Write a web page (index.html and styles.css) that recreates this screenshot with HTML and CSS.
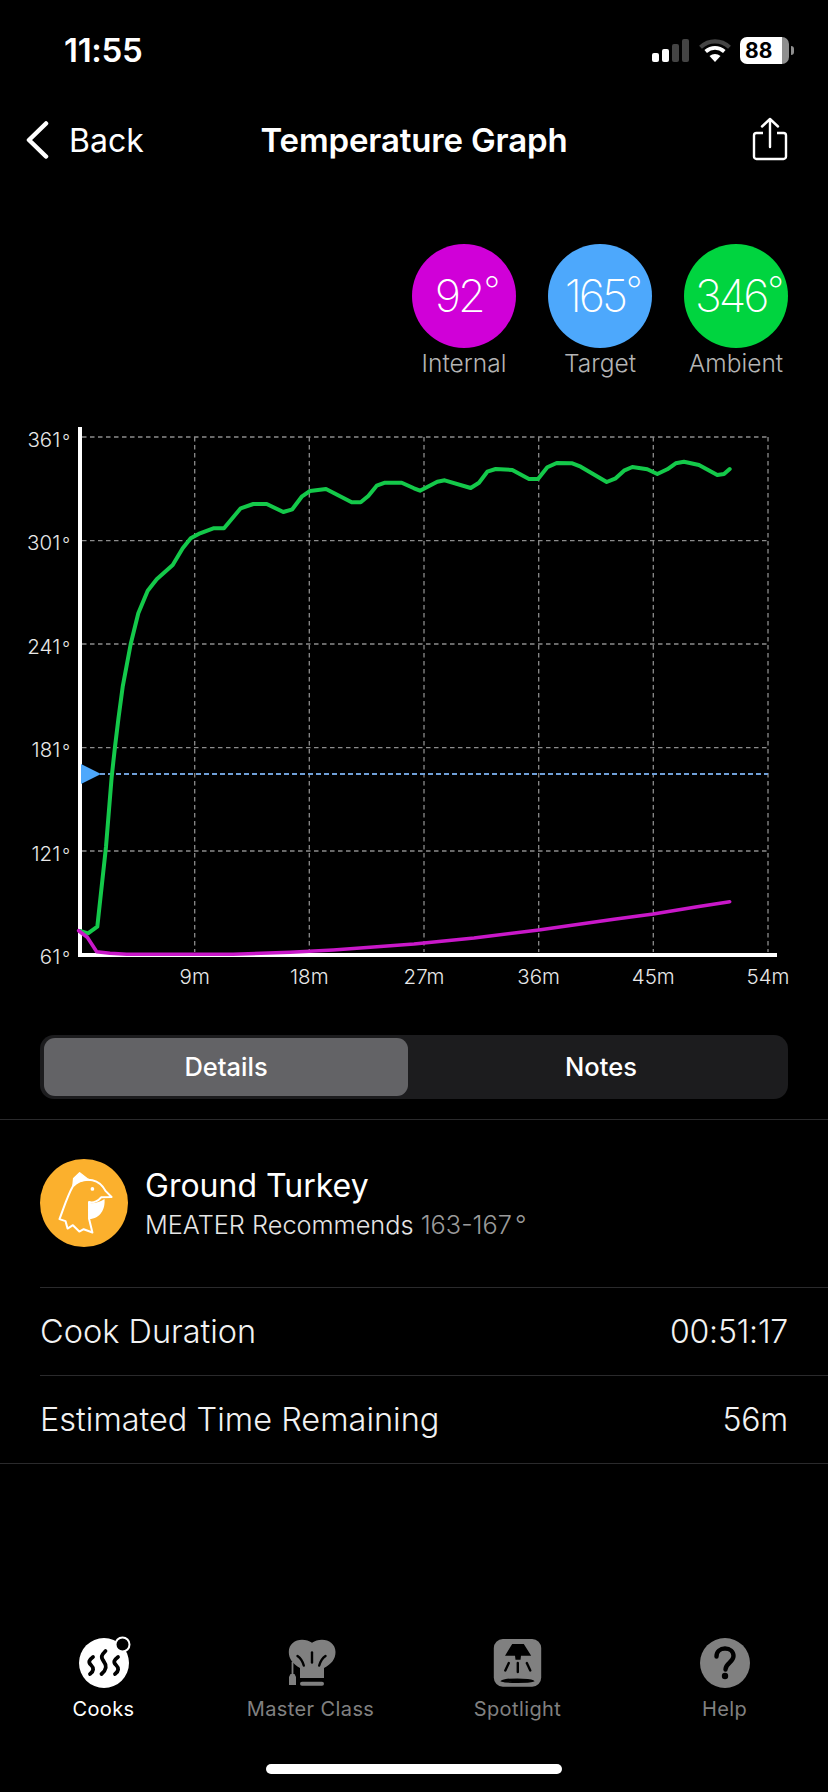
FILE: index.html
```html
<!DOCTYPE html>
<html lang="en">
<head>
<meta charset="utf-8">
<title>Temperature Graph</title>
<link rel="stylesheet" href="styles.css">
</head>
<body>
<div class="screen">
  <header class="status">
    <span class="time">11:55</span>
    <div class="status-icons">
      <svg class="signal" width="37" height="23" viewBox="0 0 37 23">
        <rect x="0" y="14" width="7" height="9" rx="2" fill="#fff"/>
        <rect x="10" y="10" width="7" height="13" rx="2" fill="#fff"/>
        <rect x="20" y="5" width="7" height="18" rx="2" fill="#444"/>
        <rect x="30" y="0" width="7" height="23" rx="2" fill="#444"/>
      </svg>
      <svg class="wifi" width="32" height="23" viewBox="0 0 32 23">
        <path d="M1.5 8.2C10 .3 22 .3 30.500 8.200" fill="none" stroke="#444" stroke-width="4.200"/>
        <path d="M6.700 12.500C12.300 7.600 19.700 7.600 25.300 12.500" fill="none" stroke="#fff" stroke-width="3.800"/>
        <path d="M16 23l-5.500-6c3.300-2.700 7.700-2.700 11 0z" fill="#fff"/>
      </svg>
      <div class="battery">
        <div class="battery-body"><span class="battery-num">88</span></div>
        <div class="battery-tip"></div>
      </div>
    </div>
  </header>

  <nav class="nav">
    <div class="back">
      <svg width="24" height="38" viewBox="0 0 24 38"><path d="M21 2.500L4 19l17 16.500" fill="none" stroke="#fff" stroke-width="4.500" stroke-linecap="round" stroke-linejoin="round"/></svg>
      <span class="back-label">Back</span>
    </div>
    <h1 class="nav-title">Temperature Graph</h1>
    <svg class="share" width="36" height="44" viewBox="0 0 36 44">
      <path d="M11 16H4.500A2.500 2.500 0 0 0 2 18.500v21A2.500 2.500 0 0 0 4.500 42h27a2.500 2.500 0 0 0 2.500-2.500v-21a2.500 2.500 0 0 0-2.500-2.500H25" fill="none" stroke="#fff" stroke-width="2.400"/>
      <path d="M18 30V2M10 9.500L18 2l8 7.500" fill="none" stroke="#fff" stroke-width="2.400" stroke-linecap="round" stroke-linejoin="round"/>
    </svg>
  </nav>

  <section class="readings">
    <div class="reading">
      <div class="dial dial-internal">92<span class="deg">°</span></div>
      <div class="reading-label">Internal</div>
    </div>
    <div class="reading">
      <div class="dial dial-target">165<span class="deg">°</span></div>
      <div class="reading-label">Target</div>
    </div>
    <div class="reading">
      <div class="dial dial-ambient">346<span class="deg">°</span></div>
      <div class="reading-label">Ambient</div>
    </div>
  </section>

  <svg class="chart" width="828" height="580" viewBox="0 420 828 580">
    <g class="grid">
      <path d="M82 437H768M82 540.700H768M82 644H768M82 747.700H768M82 851H768"/>
      <path d="M194.700 437V952M309.300 437V952M424 437V952M538.700 437V952M653.300 437V952M768 437V952"/>
    </g>
    <path class="target-line" d="M100 774H768"/>
    <path class="axis" d="M80 427V955.500M78 955H777"/>
    <path class="target-mark" d="M81 764L101 774 81 784z"/>
    <polyline class="line-ambient" points="80,931 88,933.300 97.300,926.700 106,846.700 111.700,776.700 115,746.700 118.500,718 122.700,686.700 130.700,644 138.300,613.300 147.700,590.700 156.700,579.300 172.700,565 182.700,548.300 190.700,538.300 200,533.300 213.300,528.300 224,528.300 240.700,508.300 253.300,504 266.700,504 283.300,512 292.300,509.300 301.700,496.700 310,491 326,489 351.700,502.300 360.700,502.300 368.300,496 376.700,485.700 385,482.700 401.700,482.700 414,488.300 420,490.700 437.300,481.700 444.700,480.300 470.700,488 479,482.700 487.300,471.700 495.700,469 512.300,470 529,479 538,479 547.300,467.300 556.700,463 572.300,463.300 580.700,466.700 606.700,482 615.700,478.300 624,470.700 632.300,467 647.300,469.300 657.300,474 667.300,469.300 675.700,463.300 684,461.700 699,465 717.300,475 724,474 729.700,469"/>
    <polyline class="line-internal" points="78.700,930.700 87.300,937.300 96.700,951.700 110,953.300 126.700,954.300 233,954.300 290,952.300 333.300,950 414,944 474,938 538.700,930 614,919.300 653.300,914 697.300,906.700 729.700,901.700"/>
    <g class="y-labels">
      <text x="70" y="447">361<tspan class="y-deg" dx="2">°</tspan></text>
      <text x="70" y="550">301<tspan class="y-deg" dx="2">°</tspan></text>
      <text x="70" y="654">241<tspan class="y-deg" dx="2">°</tspan></text>
      <text x="70" y="757">181<tspan class="y-deg" dx="2">°</tspan></text>
      <text x="70" y="861">121<tspan class="y-deg" dx="2">°</tspan></text>
      <text x="70" y="964">61<tspan class="y-deg" dx="2">°</tspan></text>
    </g>
    <g class="x-labels">
      <text x="194.700" y="984">9m</text>
      <text x="309.300" y="984">18m</text>
      <text x="424" y="984">27m</text>
      <text x="538.700" y="984">36m</text>
      <text x="653.300" y="984">45m</text>
      <text x="768" y="984">54m</text>
    </g>
  </svg>

  <div class="segments">
    <div class="segment segment-active">Details</div>
    <div class="segment segment-notes">Notes</div>
  </div>

  <section class="details">
    <div class="food">
      <svg class="food-icon" width="88" height="88" viewBox="30 27 262 262">
        <circle cx="161" cy="158" r="131" fill="#fbb02d"/>
        <path d="M128 108C112 135 100 175 88 206L106 212 112 234 128 224 147 243 160 236 186 246 176 205V155C190 160 205 150 212 141L243 140 225 122C216 104 204 94 186 90 162 86 142 94 128 108z" fill="none" stroke="#fff" stroke-width="6" stroke-linejoin="round"/>
        <path d="M128 106L130 85 148 68 170 85 178 90C160 88 140 95 128 106z" fill="#fff" stroke="#fff" stroke-width="4" stroke-linejoin="round"/>
        <path d="M176 158C190 160 210 155 222 146 225 175 210 205 176 206z" fill="#fff"/>
        <circle cx="186" cy="116" r="5.500" fill="#fff"/>
      </svg>
      <div class="food-text">
        <div class="food-name">Ground Turkey</div>
        <div class="food-sub">MEATER Recommends <span class="food-range">163-167<span class="food-deg">°</span></span></div>
      </div>
    </div>
    <div class="row row-first"><span>Cook Duration</span><span class="row-value">00:51:17</span></div>
    <div class="row"><span>Estimated Time Remaining</span><span class="row-value">56m</span></div>
  </section>

  <footer class="tabs">
    <div class="tab tab-active">
      <svg width="60" height="54" viewBox="0 0 60 54">
        <circle cx="30" cy="29" r="25" fill="#fff"/>
        <circle cx="48.500" cy="10.500" r="7" fill="#000" stroke="#fff" stroke-width="2"/>
        <g fill="none" stroke="#000" stroke-width="3.800" stroke-linecap="round">
          <path d="M19 23c-4 3-5 5-2 8s3 6-1 9"/>
          <path d="M31.500 17c-4 4-5 6-2 10s4 8-2 13"/>
          <path d="M44 23c-4 3-5 5-2 8s3 6-1 9"/>
        </g>
      </svg>
      <span class="tab-label">Cooks</span>
    </div>
    <div class="tab">
      <svg width="60" height="54" viewBox="0 0 60 54">
        <path d="M19 34C12 30 7.800 25 7.800 18 7.800 10 14 5.700 21 5.700c4 0 7 1 10 3 3-2 6-3 10-3 7 0 13.500 4.300 13.500 12.300 0 7-4 12-11.500 16V44H19z" fill="#808080"/>
        <rect x="19" y="47.700" width="24" height="4" rx="2" fill="#808080"/>
        <path d="M11.500 28V41" stroke="#808080" stroke-width="1.800" fill="none"/>
        <path d="M9.500 40h4l1.500 3v8H8v-8z" fill="#808080"/>
        <g fill="none" stroke="#000" stroke-width="2.400" stroke-linecap="round">
          <path d="M31 18.500V28.500"/>
          <path d="M16.500 22c3 2 5 5 6.300 9.500"/>
          <path d="M44.500 22c-3 2-5 5-6.300 9.500"/>
        </g>
      </svg>
      <span class="tab-label">Master Class</span>
    </div>
    <div class="tab">
      <svg width="60" height="54" viewBox="0 0 60 54">
        <rect x="5.800" y="5" width="47.400" height="47.700" rx="9" fill="#808080"/>
        <path d="M24.200 10h11.600l7.400 11.700H33l-.5 4h-5l-.5-4H17z" fill="#000"/>
        <g fill="none" stroke="#000" stroke-width="2.400" stroke-linecap="round">
          <path d="M29.800 29v9"/>
          <path d="M20.800 29l-3.500 7.500"/>
          <path d="M38.800 29l3.500 7.500"/>
        </g>
        <path d="M14 47c4-2.500 27-2.500 31 0-4 1.500-27 1.500-31 0z" fill="#000" stroke="#000" stroke-width="1.500"/>
      </svg>
      <span class="tab-label">Spotlight</span>
    </div>
    <div class="tab">
      <svg width="60" height="54" viewBox="0 0 60 54">
        <circle cx="30" cy="29" r="25" fill="#808080"/>
        <path d="M21.500 22.500c0-5 3.800-8 8.500-8 5 0 8.500 3 8.500 7.500 0 6.500-8 7-8 13.500" fill="none" stroke="#000" stroke-width="4.400" stroke-linecap="round"/>
        <circle cx="30" cy="42" r="3.200" fill="#000"/>
      </svg>
      <span class="tab-label">Help</span>
    </div>
  </footer>

  <div class="home-bar"><div class="home-indicator"></div></div>
</div>
</body>
</html>
```

FILE: styles.css
```css
* { box-sizing: border-box; }
html, body { margin: 0; padding: 0; background: #000; }
body { font-family: Inter, "Liberation Sans", sans-serif; color: #fff; }

.screen {
  width: 828px;
  height: 1792px;
  display: flex;
  flex-direction: column;
  overflow: hidden;
  background: #000;
}

/* status bar */
.status {
  height: 100px;
  flex: none;
  display: flex;
  align-items: center;
  justify-content: space-between;
  padding: 0 34px 0 64px;
}
.time { font-size: 33px; font-weight: 600; letter-spacing: -0.3px; }
.status-icons { display: flex; align-items: center; gap: 10px; }
.signal, .wifi { display: block; }
.battery { display: flex; align-items: center; gap: 2px; margin-left: -1px; }
.battery-body {
  width: 49px;
  height: 27px;
  border-radius: 7px;
  display: flex;
  align-items: center;
  padding-left: 5px;
  background: linear-gradient(90deg, #fff 0 42px, #8e8e8e 42px);
}
.battery-num { color: #000; font-size: 21px; font-weight: 700; line-height: 1; }
.battery-tip { width: 3px; height: 9px; border-radius: 0 3px 3px 0; background: #8e8e8e; }

/* navigation */
.nav {
  height: 80px;
  flex: none;
  display: grid;
  grid-template-columns: 1fr auto 1fr;
  align-items: center;
  padding: 0 40px;
}
.back { display: flex; align-items: center; gap: 20px; margin-left: -15px; }
.back svg { display: block; }
.back-label { font-size: 32px; font-weight: 400; }
.nav-title { margin: 0; font-size: 33px; font-weight: 600; letter-spacing: -0.15px; }
.share { justify-self: end; display: block; margin-top: -3px; }

/* readings */
.readings {
  flex: none;
  height: 240px;
  display: flex;
  justify-content: flex-end;
  gap: 32px;
  padding: 64px 40px 0 0;
}
.reading { width: 104px; display: flex; flex-direction: column; align-items: center; }
.dial {
  width: 104px;
  height: 104px;
  border-radius: 50%;
  display: flex;
  align-items: flex-start;
  justify-content: center;
  padding-top: 24px;
  font-size: 45px;
  line-height: 56px;
  font-weight: 150;
  letter-spacing: -3px;
}
.deg { font-size: 36px; line-height: 44px; margin-left: 1px; margin-right: -4px; }
.dial-internal { background: #d000d8; }
.dial-target { background: #4da8fc; }
.dial-ambient { background: #00d43f; }
.reading-label { font-size: 24.500px; font-weight: 300; line-height: 30px; color: #b4b4b4; white-space: nowrap; }

/* chart */
.chart { display: block; flex: none; }
.grid path { fill: none; stroke: #8c8c8c; stroke-width: 1.300; stroke-dasharray: 4.500 3.500; }
.target-line { fill: none; stroke: #6f9fd8; stroke-width: 2; stroke-dasharray: 5 3; }
.axis { fill: none; stroke: #fff; stroke-width: 4; }
.target-mark { fill: #4da8fc; }
.line-ambient { fill: none; stroke: #14c94a; stroke-width: 4; stroke-linejoin: round; stroke-linecap: round; }
.line-internal { fill: none; stroke: #c918c9; stroke-width: 3.600; stroke-linejoin: round; stroke-linecap: round; }
.y-labels text { font-size: 20.500px; fill: #e8e8e8; text-anchor: end; font-weight: 300; }
.y-deg { font-size: 17px; }
.x-labels text { font-size: 20.500px; fill: #e8e8e8; text-anchor: middle; font-weight: 300; }

/* segmented control */
.segments {
  flex: none;
  height: 64px;
  margin: 35px 40px 0;
  padding: 3px 4px;
  border-radius: 14px;
  background: #1c1c1e;
  display: grid;
  grid-template-columns: 364px 1fr;
}
.segment {
  display: flex;
  align-items: center;
  justify-content: center;
  padding-bottom: 1px;
  font-size: 25.500px;
  font-weight: 500;
  border-radius: 11px;
}
.segment-active { background: #636366; }
.segment-notes { padding-left: 10px; }

/* details */
.details {
  flex: none;
  margin-top: 20px;
  border-top: 1px solid #2a2a2c;
  border-bottom: 1px solid #2a2a2c;
}
.food {
  height: 167px;
  display: flex;
  align-items: center;
  gap: 17px;
  padding: 0 40px 2px;
}
.food-icon { display: block; flex: none; }
.food-text { padding-top: 2px; }
.food-name { font-size: 32px; font-weight: 400; line-height: 40px; }
.food-sub { margin-top: 3px; font-size: 25.300px; font-weight: 300; line-height: 32px; color: #e6e6e6; }
.food-range { color: #9a9a9a; }
.food-deg { margin-left: 3px; }
.row {
  margin-left: 40px;
  padding-right: 40px;
  height: 88px;
  display: flex;
  align-items: center;
  justify-content: space-between;
  font-size: 32.500px;
  font-weight: 300;
  color: #f2f2f2;
  border-top: 1px solid #2a2a2c;
}
.row-value { font-size: 32px; letter-spacing: -0.2px; }

/* tabs */
.tabs {
  flex: none;
  margin-top: 170px;
  display: grid;
  grid-template-columns: repeat(4, 207px);
}
.tab { display: flex; flex-direction: column; align-items: center; color: #808080; }
.tab svg { display: block; }
.tab-active { color: #fff; }
.tab-label { margin-top: 7px; font-size: 20px; font-weight: 400; line-height: 28px; letter-spacing: 0.4px; white-space: nowrap; }

/* home indicator */
.home-bar { flex: 1; display: flex; justify-content: center; align-items: flex-start; padding-top: 41px; }
.home-indicator { width: 296px; height: 10px; border-radius: 5px; background: #fff; }
```
